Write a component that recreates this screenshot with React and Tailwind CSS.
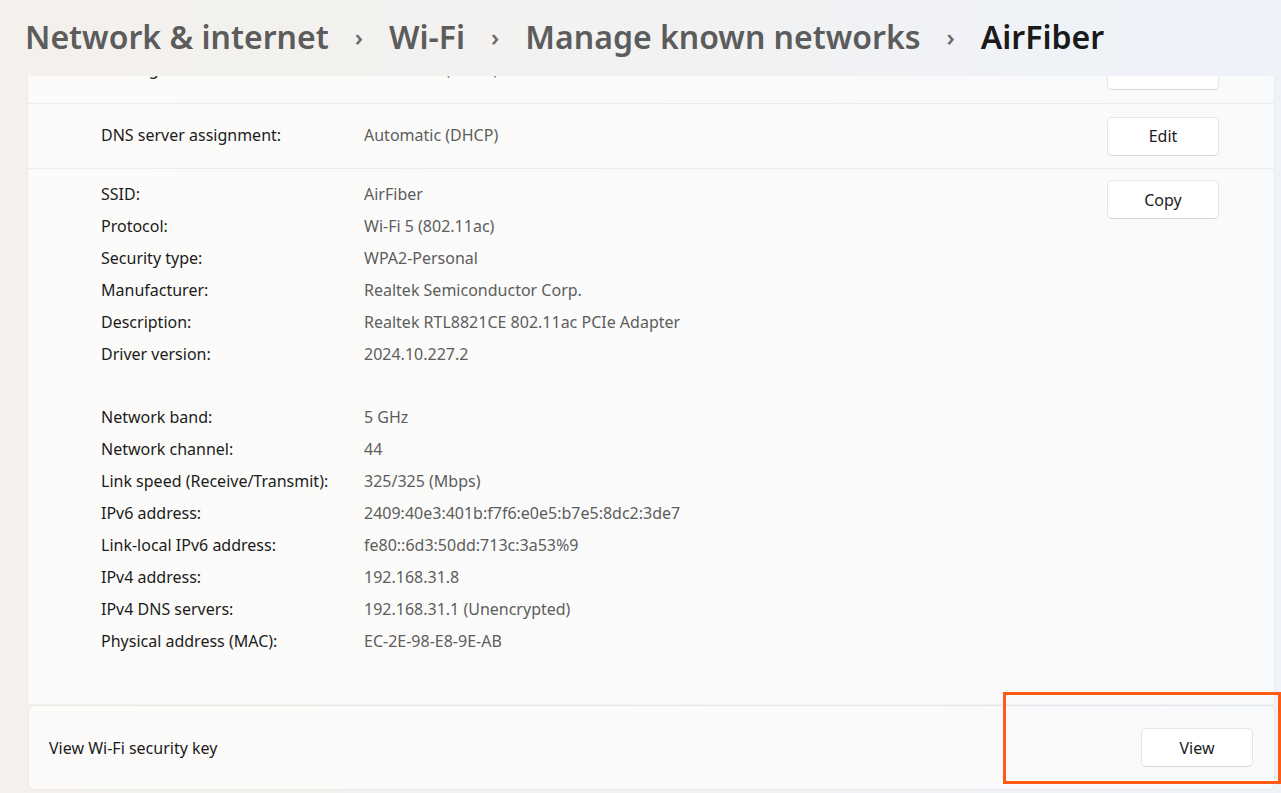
const font = { fontFamily: '"Segoe UI", "Noto Sans", "Open Sans", sans-serif' };

function Btn({ children }) {
  return (
    <button className="w-[112px] h-[39px] rounded-[5px] bg-white border border-[#e5e5e5] border-b-[#d4d4d4] text-[16px] text-[#1b1b1b]">
      {children}
    </button>
  );
}

const group1 = [
  ["SSID:", "AirFiber"],
  ["Protocol:", "Wi-Fi 5 (802.11ac)"],
  ["Security type:", "WPA2-Personal"],
  ["Manufacturer:", "Realtek Semiconductor Corp."],
  ["Description:", "Realtek RTL8821CE 802.11ac PCIe Adapter"],
  ["Driver version:", "2024.10.227.2"],
];

const group2 = [
  ["Network band:", "5 GHz"],
  ["Network channel:", "44"],
  ["Link speed (Receive/Transmit):", "325/325 (Mbps)"],
  ["IPv6 address:", "2409:40e3:401b:f7f6:e0e5:b7e5:8dc2:3de7"],
  ["Link-local IPv6 address:", "fe80::6d3:50dd:713c:3a53%9"],
  ["IPv4 address:", "192.168.31.8"],
  ["IPv4 DNS servers:", "192.168.31.1 (Unencrypted)"],
  ["Physical address (MAC):", "EC-2E-98-E8-9E-AB"],
];

function Line({ label, value }) {
  return (
    <div className="flex h-[32px] items-center text-[16px]">
      <span className="w-[263px] text-[#1b1b1b]">{label}</span>
      <span className="text-[#5d5d5d]">{value}</span>
    </div>
  );
}

function SettingRow({ label, value, action }) {
  return (
    <div className="flex h-[64px] items-center pl-[73px] pr-[55px] text-[16px]">
      <span className="w-[263px] -mt-[3px] text-[#1b1b1b]">{label}</span>
      <span className="flex-1 -mt-[3px] text-[#5d5d5d]">{value}</span>
      <Btn>{action}</Btn>
    </div>
  );
}

function Chevron() {
  return <span className="mx-[26px] text-[24px] text-[#6b6b6b]">›</span>;
}

export default function App() {
  return (
    <div
      style={font}
      className="relative w-[1281px] h-[793px] overflow-hidden bg-gradient-to-r from-[#f4f1ec] via-[#f2f2f2] to-[#eef2f9]"
    >
      <header className="h-[76px] flex items-center pl-[25px] pb-[2px] text-[32px] font-semibold text-[#5c5c5c]">
        <span>Network &amp; internet</span>
        <Chevron />
        <span>Wi-Fi</span>
        <Chevron />
        <span>Manage known networks</span>
        <Chevron />
        <span className="text-[#1a1a1a]">AirFiber</span>
      </header>

      <div className="ml-[27px] w-[1248px] h-[628px] border-l border-r border-black/[0.06] bg-gradient-to-r from-[#fcfbf9] to-[#f9fafc]">
        <div className="h-[28px] overflow-hidden border-b border-black/[0.06]">
          <div className="-mt-[38px]">
            <SettingRow label="IP assignment:" value="Automatic (DHCP)" action="Edit" />
          </div>
        </div>
        <div className="border-b border-black/[0.06]">
          <SettingRow label="DNS server assignment:" value="Automatic (DHCP)" action="Edit" />
        </div>
        <div className="flex pl-[73px] pr-[55px] pt-[9px]">
          <div className="flex-1">
            {group1.map(([l, v]) => (
              <Line key={l} label={l} value={v} />
            ))}
            <div className="h-[31px]" />
            {group2.map(([l, v]) => (
              <Line key={l} label={l} value={v} />
            ))}
          </div>
          <div className="pt-[2px]">
            <Btn>Copy</Btn>
          </div>
        </div>
      </div>

      <div className="ml-[28px] mt-[1px] w-[1247px] h-[85px] rounded-[6px] border border-black/[0.07] bg-gradient-to-r from-[#fcfbf9] to-[#f9fafc] flex items-center pl-[20px] pr-[21px]">
        <span className="flex-1 text-[16px] text-[#1b1b1b]">View Wi-Fi security key</span>
        <Btn>View</Btn>
      </div>

      <div className="absolute left-[1003px] top-[692px] w-[278px] h-[92px] border-[3px] border-[#ff5a16]" />
    </div>
  );
}
